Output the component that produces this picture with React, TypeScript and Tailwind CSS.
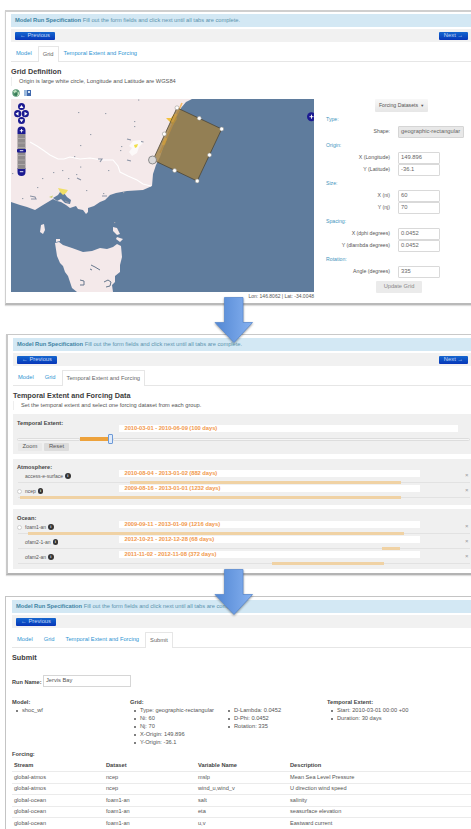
import React from "react";

const Banner = () => (
  <div className="flex h-[13px] shrink-0 items-center bg-[#d3e8f4] pl-[4px] text-[5.75px] text-[#5b93ae]">
    <span className="tracking-[-0.03px]">
      <b className="text-[#3f83a3]">Model Run Specification</b> Fill out the form fields and click next until all tabs are complete.
    </span>
  </div>
);

const navButton =
  "flex h-[8px] items-center justify-center rounded-[1px] bg-linear-to-b from-[#1766cf] to-[#0a35b8] text-[5.8px] text-[#c3d8f7]";

const Toolbar = ({ next }: { next: boolean }) => (
  <div className="mt-[2px] flex h-[13px] shrink-0 items-center justify-between bg-[#f1f1f1] pl-[4px] pr-[3px]">
    <div className={`${navButton} w-[40px]`}>← Previous</div>
    {next && <div className={`${navButton} w-[29px]`}>Next →</div>}
  </div>
);

const Tabs = ({ items, active }: { items: string[]; active: string }) => (
  <div className="mt-[4px] flex h-[16px] shrink-0 border-b border-[#e6e6e6] text-[5.75px]">
    {items.map((t) =>
      t === active ? (
        <div key={t} className="-mb-px flex h-[16px] items-center rounded-t-[1px] border border-b-0 border-[#e6e6e6] bg-white px-[4px] text-[#666]">
          {t}
        </div>
      ) : (
        <div key={t} className="flex h-[16px] items-center pl-[5px] pr-[6px] text-[#2e94d2]">
          {t}
        </div>
      ),
    )}
  </div>
);

const Heading = ({ children }: { children: React.ReactNode }) => (
  <div className="flex h-[9px] shrink-0 items-center text-[7.25px] font-bold text-[#3d3d3d]">{children}</div>
);

const Note = ({ children }: { children: React.ReactNode }) => (
  <div className="mt-[1px] flex h-[9px] shrink-0 items-center border-l border-[#eeeeee] pl-[7px] text-[5.68px] text-[#555]">{children}</div>
);

const specks: [number, number][] = [
  [78, 112], [105, 113], [138, 99.5], [134, 121], [134, 126], [90, 134], [80, 145], [120, 150], [80, 166.5],
  [108, 170], [53, 172], [42, 178], [37, 187], [12, 173], [86, 190], [103, 193], [114, 222], [121, 146],
  [22, 198], [76, 174], [123, 192], [62, 170], [74, 156], [68, 178],
];

const handles: [number, number][] = [
  [177, 107.8], [199.3, 118.3], [221.7, 129], [209.5, 155], [197.2, 181], [174.6, 170.6], [164.3, 134],
];

const MapView = () => (
  <svg viewBox="11 99 303 193" className="block h-[193px] w-[303px]">
    <rect x="11" y="99" width="303" height="193" fill="#5f7c9d" />
    <path
      d="M11 99H192L186 102L181 108L174 121L168 133L164 145L160 157L156 165L153 174L152 186L143 190L127 191L116 193L110 195L105 200L100 202L94 206L88 208L88 212L86 214L83 210L78 209L76 206L70 208L66 205L61 202L57 201L53 199L48 202L43 205L35 210L27 207L20 205L11 202Z"
      fill="#f4e9ea"
    />
    <path d="M30 142L37 146L43 150L50 155L58 159L64 159L70 157L80 159L90 158L102 160L113 160L118 166L120 172L128 176L137 180L143 184L151 186" fill="none" stroke="#fff" strokeWidth="1.1" />
    <path d="M129 146L133 141L140 140L143 143L139 147L137 153L132 156L129 152L132 148Z" fill="#fff" opacity=".7" />
    <path d="M53 198L58 195L60 192L64 193L67 197L71 200L70 204L65 203L61 199L57 201Z" fill="#5f7c9d" />
    <path d="M58 188L68 190L66 193L63 195L60 192Z" fill="#f0de66" />
    <path d="M49 197L53 195.500L52 198Z" fill="#cfd06f" />
    <path d="M134 145L138 144L137 147L135 148Z" fill="#f1df47" />
    <path
      d="M55 243L59 242L63 245L72 248L83 252L92 251L100 248L107 249L113 247L117 244L121 246L122 257L120 265L120 272L115 276L115 282L112 285L113 292H77L72 288L70 282L68 276L65 272L63 266L60 263L57 256Z"
      fill="#f4e9ea"
    />
    <path d="M41 225L44 224L45 230L43 234L40 232Z M113 227L117 228L120 234L117 235L113 231Z M117 237L123 239L120 242L116 239Z M56 239L60 239L60 241L56 242Z" fill="#f4e9ea" />
    <path d="M80 280l4 1 0 4-4 0M91 265l4 2 5 3M104 282l4-2 3 2-1 4-4 1M90 269l2 1" fill="none" stroke="#66778c" strokeWidth="1" />
    <path d="M30 196l5 1 1 2-5 0M98 159l4 0-2 3M127 139l4 1M77 178l4 2M127 160l4 1M141 141.500l2.500 0.500M65 201l4 2M102 196l5 0" fill="none" stroke="#8b93a5" strokeWidth="1.100" />
    {specks.map(([x, y], i) => (
      <rect key={i} x={x} y={y} width="1.3" height="1.1" fill="#9aa0ac" />
    ))}
    <path d="M182 103L175 119L165 142L160 153" stroke="#f4b967" strokeWidth="1.6" fill="none" />
    <path d="M166 118L171 118L174 114L177 119L173 125ZM162 142l5-3-2 6z" fill="#f2c13f" />
    <path d="M177 107.8L221.7 129L197.2 181L153 160Z" fill="#a07f42" fillOpacity=".8" stroke="#4d4637" strokeWidth=".8" />
    <path d="M176 114L172 122M166 138L163 145" stroke="#d7a33f" strokeWidth="2.500" fill="none" opacity=".65" />
    {handles.map(([x, y]) => (
      <circle key={x} cx={x} cy={y} r="2" fill="#fff" stroke="#8c8b83" strokeWidth=".5" />
    ))}
    <circle cx="152.5" cy="160" r="4" fill="#dbd9da" stroke="#777" strokeWidth=".8" />
    <g transform="translate(-11 0)">
      <g fill="#1b1a91">
        <circle cx="32.500" cy="106.500" r="3.500" />
        <circle cx="28.700" cy="113.700" r="3.600" />
        <circle cx="36.300" cy="113.700" r="3.600" />
        <circle cx="32.500" cy="120.500" r="3.500" />
        <path d="M28.500 134v-3.500a4 4 0 0 1 8 0v3.500zM28.500 168v4a4 4 0 0 0 8 0v-4z" />
      </g>
      <path d="M30.500 108l2-3 2 3zM30.500 119.300l2 3 2-3zM29.500 111.700l-3 2 3 2zM35.500 111.700l3 2-3 2z" fill="#fff" />
      <rect x="28.500" y="134" width="8" height="35" fill="#8f8b8d" />
      <path d="M28.500 138.500h8M28.500 143h8M28.500 147.500h8M28.500 155.500h8M28.500 160h8M28.500 164.500h8" stroke="#b9b4b5" strokeWidth=".7" />
      <rect x="28" y="149" width="9" height="3.500" rx="1" fill="#1b1a91" />
      <path d="M30.800 150.700h3.500M30.800 130.700h3.500M32.500 129v3.500M30.800 171.700h3.500" stroke="#fff" strokeWidth=".9" />
    </g>
    <circle cx="311.500" cy="116.700" r="4.500" fill="#1b1a91" />
    <path d="M309.500 116.700h4M311.500 114.700v4" stroke="#fff" strokeWidth=".9" />
  </svg>
);

const Group = ({ children }: { children: string }) => (
  <div className="flex h-[8px] items-center text-[5.2px] text-[#4595bd]">{children}</div>
);

const Field = ({ label, value, disabled }: { label: string; value: string; disabled?: boolean }) => (
  <div className="flex h-[12px] items-center">
    <div className="w-[64px] text-right text-[5.2px] text-[#555]">{label}</div>
    {disabled ? (
      <div className="ml-[8px] flex h-[12px] w-[66px] items-center rounded-[1px] border border-[#d5d5d5] bg-[#e8e8e8] pl-[2px] text-[5.75px] text-[#666]">{value}</div>
    ) : (
      <div className="ml-[8px] flex h-[12px] w-[42px] items-center rounded-[1px] border border-[#d9d9d9] bg-white pl-[2px] text-[5.8px] text-[#666]">{value}</div>
    )}
  </div>
);

const GridForm = () => (
  <div className="ml-[12px] flex flex-col">
    <div className="ml-[49px] flex h-[13px] w-[53px] items-center justify-center rounded-[1px] bg-linear-to-b from-[#f8f8f8] to-[#e6e6e6] text-[5.2px] text-[#555]">
      Forcing Datasets <span className="ml-[2px] text-[4px]">▼</span>
    </div>
    <div className="h-[4px]" />
    <Group>Type:</Group>
    <div className="h-[2px]" />
    <Field label="Shape:" value="geographic-rectangular" disabled />
    <div className="h-[4px]" />
    <Group>Origin:</Group>
    <div className="h-[2px]" />
    <Field label="X (Longitude)" value="149.896" />
    <Field label="Y (Latitude)" value="-36.1" />
    <div className="h-[4px]" />
    <Group>Size:</Group>
    <div className="h-[2px]" />
    <Field label="X (ni)" value="60" />
    <Field label="Y (nj)" value="70" />
    <div className="h-[4px]" />
    <Group>Spacing:</Group>
    <div className="h-[2px]" />
    <Field label="X (dphi degrees)" value="0.0452" />
    <Field label="Y (dlambda degrees)" value="0.0452" />
    <div className="h-[4px]" />
    <Group>Rotation:</Group>
    <div className="h-[2px]" />
    <Field label="Angle (degrees)" value="335" />
    <div className="ml-[50px] mt-[3px] flex h-[12px] w-[46px] items-center justify-center rounded-[1px] bg-[#ebebeb] text-[5.7px] text-[#888]">Update Grid</div>
  </div>
);

const Info = () => (
  <span className="ml-[2px] flex size-[5.5px] items-center justify-center rounded-full bg-[#333] text-[4px] font-bold text-white">i</span>
);

type RowProps = { name: string; date: string; from: number; to: number; radio?: boolean };

const DatasetRow = ({ name, date, from, to, radio }: RowProps) => (
  <div className="flex h-[15px] flex-col">
    <div className="flex h-[9px]">
      <div className="mt-[3px] flex h-[6px] w-[106px] items-center pl-[4px] text-[5px] text-[#555]">
        <span className={radio ? "mr-[3px] size-[5px] rounded-full border border-[#cfcfcf] bg-white" : "mr-[3px] size-[5px]"} />
        {name}
        <Info />
      </div>
      <div className="flex h-[7px] w-[301px] items-center bg-white pl-[5.500px] text-[5.800px] font-bold tracking-[-0.05px] text-[#f2994d]">{date}</div>
      <div className="ml-[45px] mt-[2px] flex h-[5px] items-center text-[6px] text-[#999]">×</div>
    </div>
    <div className="mt-[2px] flex h-[3px] w-full items-center">
      <div className="ml-[5px] h-px shrink-0 bg-[#e2e2e2]" style={{ width: from - 18 }} />
      <div className="h-[3px] shrink-0 bg-[#f0d2a4]" style={{ width: to - from }} />
      <div className="mr-[1px] h-px grow bg-[#e2e2e2]" />
    </div>
  </div>
);

const PanelGrid = () => (
  <section className="ml-[5px] flex h-[295px] shrink-0 flex-col border-b-2 border-l-[1px] border-t-2 border-[#cfcfcf] border-b-[#b9b9b9] bg-white pl-[5px] pt-[2px] shadow-[0_1px_1px_#ddd]">
    <Banner />
    <Toolbar next />
    <Tabs items={["Model", "Grid", "Temporal Extent and Forcing"]} active="Grid" />
    <div className="h-[5px]" />
    <Heading>Grid Definition</Heading>
    <Note>Origin is large white circle, Longitude and Latitude are WGS84</Note>
    <div className="mt-[3px] flex h-[8px] gap-[4px] pl-[1px]">
      <svg viewBox="0 0 8 8" className="size-[8px]">
        <circle cx="4" cy="4" r="3.700" fill="#5c9a78" />
        <path d="M1 2l3-1 1 2-2 2zM5 4l2-1v3l-2 1z" fill="#bfe0be" />
        <path d="M2 5h4M4 3v4" stroke="#28704b" />
      </svg>
      <svg viewBox="0 0 8 8" className="size-[8px]">
        <path d="M0 1h3v6H0z" fill="#9bb9dd" />
        <path d="M3 1h4v6H3z" fill="#4069ad" />
        <path d="M4 2h2v2H4z" fill="#d8e6f4" />
      </svg>
    </div>
    <div className="mt-[2px] flex">
      <div className="w-[303px] shrink-0">
        <MapView />
        <div className="flex h-[9px] items-center justify-end text-[5.000px] text-[#555]">Lon: 146.8062 | Lat: -34.0048</div>
      </div>
      <GridForm />
    </div>
  </section>
);

const PanelForcing = () => (
  <section className="ml-[6px] mt-[29px] flex h-[241px] shrink-0 flex-col border-b-2 border-l-2 border-t border-[#c9c9c9] border-b-[#b3b3b3] bg-white pl-[5px] pt-[3px] shadow-[0_1px_1px_#ddd]">
    <Banner />
    <Toolbar next />
    <Tabs items={["Model", "Grid", "Temporal Extent and Forcing"]} active="Temporal Extent and Forcing" />
    <div className="h-[5px]" />
    <Heading>Temporal Extent and Forcing Data</Heading>
    <Note>Set the temporal extent and select one forcing dataset from each group.</Note>
    <div className="mt-[4px] flex h-[40px] shrink-0 flex-col bg-[#f0f0f0]">
      <div className="flex h-[20px]">
        <div className="mt-[6px] flex h-[8px] w-[106px] items-center pl-[4px] text-[5.700px] font-bold text-[#444]">Temporal Extent:</div>
        <div className="mt-[11px] flex h-[7px] w-[339px] items-center bg-white pl-[5.500px] text-[5.800px] font-bold tracking-[-0.05px] text-[#f2994d]">
          2010-03-01 - 2010-06-09 (100 days)
        </div>
      </div>
      <div className="flex h-[10px] items-center pl-[4px] pr-[1px]">
        <div className="h-[3px] w-[63px] rounded-l-sm border border-[#dddddd] bg-[#f6f6f6]" />
        <div className="h-[4px] w-[28px] bg-[#eda23c]" />
        <div className="h-[10px] w-[5px] rounded-[1px] border border-[#6d9ad6] bg-[#dfeafa]" />
        <div className="h-[3px] grow rounded-r-sm border border-[#dddddd] bg-[#f6f6f6]" />
      </div>
      <div className="-mt-px flex h-[8px] gap-[2px] pl-[5px] text-[5.8px] text-[#555]">
        <div className="flex w-[24px] items-center justify-center rounded-[1px] bg-[#e9e9e9]">Zoom</div>
        <div className="flex w-[25px] items-center justify-center rounded-[1px] bg-[#dcdcdc]">Reset</div>
      </div>
    </div>
    <div className="mt-[5px] flex h-[46px] shrink-0 flex-col bg-[#f0f0f0]">
      <div className="mt-[6px] flex h-[5px] items-center pl-[4px] text-[5.700px] font-bold text-[#444]">Atmosphere:</div>
      <DatasetRow name="access-e-surface" date="2010-08-04 - 2013-01-02 (882 days)" from={130} to={401} />
      <DatasetRow name="ncep" date="2009-08-16 - 2013-01-01 (1232 days)" from={20} to={401} radio />
    </div>
    <div className="mt-[4px] flex h-[60px] shrink-0 flex-col bg-[#f0f0f0]">
      <div className="mt-[7px] flex h-[5px] items-center pl-[4px] text-[5.700px] font-bold text-[#444]">Ocean:</div>
      <DatasetRow name="foam1-an" date="2009-09-11 - 2013-01-09 (1216 days)" from={28} to={404} radio />
      <DatasetRow name="ofam2-1-an" date="2012-10-21 - 2012-12-28 (68 days)" from={382} to={400} />
      <DatasetRow name="ofam2-an" date="2011-11-02 - 2012-11-08 (372 days)" from={272} to={384} />
    </div>
  </section>
);

const Bullets = ({ items }: { items: string[] }) => (
  <ul className="flex flex-col">
    {items.map((t) => (
      <li key={t} className="flex h-[8px] items-center">
        <span className="ml-[4px] mr-[4px] size-[2px] rounded-full bg-[#555]" />
        {t}
      </li>
    ))}
  </ul>
);

const table = [
  ["global-atmos", "ncep", "mslp", "Mean Sea Level Pressure"],
  ["global-atmos", "ncep", "wind_u,wind_v", "U direction wind speed"],
  ["global-ocean", "foam1-an", "salt", "salinity"],
  ["global-ocean", "foam1-an", "eta", "seasurface elevation"],
  ["global-ocean", "foam1-an", "u,v", "Eastward current"],
];

const PanelSubmit = () => (
  <section className="ml-[5px] mt-[21px] flex h-[240px] shrink-0 flex-col border-l border-t border-[#c4c4c4] bg-white pl-[6px] pt-[3px]">
    <Banner />
    <Toolbar next={false} />
    <Tabs items={["Model", "Grid", "Temporal Extent and Forcing", "Submit"]} active="Submit" />
    <div className="h-[5px]" />
    <Heading>Submit</Heading>
    <div className="mt-[13px] flex h-[12px] shrink-0 items-center">
      <b className="mt-[3px] w-[31px] text-[5.600px] text-[#444]">Run Name:</b>
      <div className="flex h-[12px] w-[88px] items-center border border-[#d6d6d6] pl-[2px] text-[5.700px] text-[#555]">Jervis Bay</div>
    </div>
    <div className="mt-[12px] flex h-[48px] shrink-0 text-[5.700px] text-[#555]">
      <div className="w-[118px]">
        <b className="flex h-[8px] items-center text-[#444]">Model:</b>
        <Bullets items={["shoc_wf"]} />
      </div>
      <div className="w-[94px]">
        <b className="flex h-[8px] items-center text-[#444]">Grid:</b>
        <Bullets items={["Type: geographic-rectangular", "Ni: 60", "Nj: 70", "X-Origin: 149.896", "Y-Origin: -36.1"]} />
      </div>
      <div className="w-[103px] pt-[8px]">
        <Bullets items={["D-Lambda: 0.0452", "D-Phi: 0.0452", "Rotation: 335"]} />
      </div>
      <div>
        <b className="flex h-[8px] items-center text-[#444]">Temporal Extent:</b>
        <Bullets items={["Start: 2010-03-01 00:00 +00", "Duration: 30 days"]} />
      </div>
    </div>
    <b className="mt-[4px] flex h-[8px] shrink-0 items-center text-[5.700px] text-[#444]">Forcing:</b>
    <div className="mt-px grid h-[11px] shrink-0 grid-cols-[92px_92px_92px_1fr] items-center pl-[2px] text-[5.700px] font-bold text-[#444]">
      <span>Stream</span>
      <span>Dataset</span>
      <span>Variable Name</span>
      <span>Description</span>
    </div>
    {table.map((row, i) => (
      <div key={i} className="grid h-[11.600px] shrink-0 grid-cols-[92px_92px_92px_1fr] items-center border-t border-[#ebebeb] pl-[2px] text-[5.600px] text-[#555]">
        {row.map((cell, j) => (
          <span key={j}>{cell}</span>
        ))}
      </div>
    ))}
  </section>
);

const Arrow = ({ id }: { id: string }) => (
  <svg viewBox="0 0 44 52" className="block h-[52px] w-[44px] drop-shadow-[0_1px_1px_rgba(0,0,0,0.4)]">
    <defs>
      <linearGradient id={id} x1="0" y1="0" x2="1" y2="0">
        <stop offset="0" stopColor="#5287d3" />
        <stop offset="1" stopColor="#86b1f0" />
      </linearGradient>
    </defs>
    <path d="M12.500 1.500H31V26.500H40.500L22 46.500L3 26.500H12.500Z" fill={`url(#${id})`} stroke="#5c8bd0" strokeWidth=".8" />
  </svg>
);

export default function App() {
  return (
    <main className="relative flex h-[829px] w-[471px] flex-col overflow-hidden bg-white pt-[10px] font-['Liberation_Sans',Arial,sans-serif] leading-none whitespace-nowrap">
      <PanelGrid />
      <PanelForcing />
      <PanelSubmit />
      <div className="absolute left-[212px] top-[296px]">
        <Arrow id="arrow-forcing" />
      </div>
      <div className="absolute left-[212px] top-[568px]">
        <Arrow id="arrow-submit" />
      </div>
    </main>
  );
}
